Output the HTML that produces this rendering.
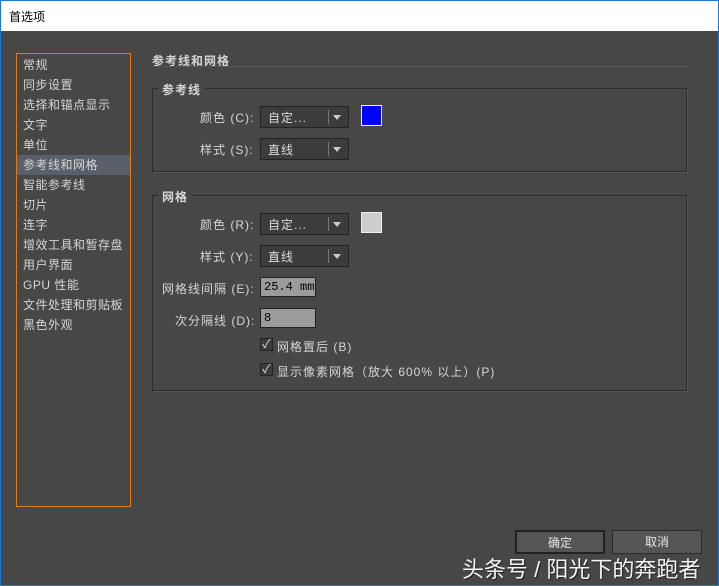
<!DOCTYPE html>
<html><head><meta charset="utf-8"><style>
*{margin:0;padding:0;box-sizing:border-box}
body{width:719px;height:586px;overflow:hidden;background:#474747;font-family:"Liberation Sans","Noto Sans CJK SC",sans-serif;font-size:12px;color:#d6d6d6;position:relative}
.frame{position:absolute;left:0;top:0;width:719px;height:586px;border:1px solid #1a7ad6;pointer-events:none;z-index:5}
.title{position:absolute;left:0;top:0;width:719px;height:31px;background:#fff;color:#000;font-size:12px;padding:8px 0 0 9px}
.a{position:absolute;white-space:nowrap}
.l{letter-spacing:1px}
.side{position:absolute;left:16px;top:53px;width:115px;height:454px;border:1px solid #e07b16;background:#474747}
.side div{height:20px;line-height:20px;padding-left:6px;letter-spacing:0.5px}
.side .sel{background:#5a606b}
.grp{position:absolute;border:1px solid #2c2c2c;box-shadow:1px 1px 0 #555}
.lg{position:absolute;background:#474747;padding:0 4px;font-weight:bold;letter-spacing:1px}
.dd{position:absolute;width:89px;height:22px;background:#3c3c3c;border:1px solid #232323;padding:2px 0 0 7px;color:#ddd;letter-spacing:1px}
.dd:after{content:"";position:absolute;right:7px;top:8px;border:4px solid transparent;border-top:5px solid #ccc;border-bottom:0}
.dd:before{content:"";position:absolute;right:19px;top:3px;width:1px;height:14px;background:#777}
.inp{position:absolute;width:56px;height:20px;background:#9b9b9b;border:1px solid #222;color:#000;font-family:"Liberation Mono","Noto Sans CJK SC",monospace;font-size:12px;padding:2px 0 0 3px}
.cb{position:absolute;width:13px;height:13px;background:#3c3c3c;border:1px solid #222;color:#ddd;font-size:12px;line-height:11px;text-align:center}
.btn{position:absolute;height:24px;background:#555;border:1px solid #2a2a2a;text-align:center;line-height:22px;color:#e6e6e6}
</style></head><body>
<div class="title">首选项</div>
<div class="side">
<div style="margin-top:1px">常规</div><div>同步设置</div><div>选择和锚点显示</div><div>文字</div><div>单位</div><div class="sel">参考线和网格</div><div>智能参考线</div><div>切片</div><div>连字</div><div>增效工具和暂存盘</div><div>用户界面</div><div>GPU 性能</div><div>文件处理和剪贴板</div><div>黑色外观</div>
</div>
<div class="a l" style="left:152px;top:52px;font-weight:bold">参考线和网格</div>
<div class="a" style="left:152px;top:66px;width:536px;height:1px;background:#2c2c2c;border-bottom:1px solid #555"></div>

<div class="grp" style="left:152px;top:88px;width:535px;height:84px"></div>
<div class="lg" style="left:158px;top:81px">参考线</div>
<div class="a l" style="left:200px;top:109px">颜色 (C):</div>
<div class="dd" style="left:260px;top:106px">自定...</div>
<div class="a" style="left:361px;top:105px;width:21px;height:21px;background:#0000ff;border:1px solid #eee"></div>
<div class="a l" style="left:200px;top:141px">样式 (S):</div>
<div class="dd" style="left:260px;top:138px">直线</div>

<div class="grp" style="left:152px;top:195px;width:535px;height:196px"></div>
<div class="lg" style="left:158px;top:188px">网格</div>
<div class="a l" style="left:200px;top:216px">颜色 (R):</div>
<div class="dd" style="left:260px;top:213px">自定...</div>
<div class="a" style="left:361px;top:212px;width:21px;height:21px;background:#cdcdcd;border:1px solid #eee"></div>
<div class="a l" style="left:200px;top:248px">样式 (Y):</div>
<div class="dd" style="left:260px;top:245px">直线</div>
<div class="a l" style="left:162px;top:280px">网格线间隔 (E):</div>
<div class="inp" style="left:260px;top:277px">25.4 mm</div>
<div class="a l" style="left:175px;top:312px">次分隔线 (D):</div>
<div class="inp" style="left:260px;top:308px">8</div>
<div class="cb" style="left:260px;top:338px">✓</div>
<div class="a l" style="left:277px;top:338px">网格置后 (B)</div>
<div class="cb" style="left:260px;top:363px">✓</div>
<div class="a l" style="left:277px;top:363px">显示像素网格（放大 600% 以上）(P)</div>

<div class="btn" style="left:515px;top:530px;width:90px;border-color:#222;border-width:2px">确定</div>
<div class="btn" style="left:612px;top:530px;width:90px">取消</div>
<div class="a" style="left:462px;top:552px;font-size:22px;color:#f4f4f4;text-shadow:1px 1px 1px #222">头条号 / 阳光下的奔跑者</div>
<div class="frame"></div>
</body></html>
